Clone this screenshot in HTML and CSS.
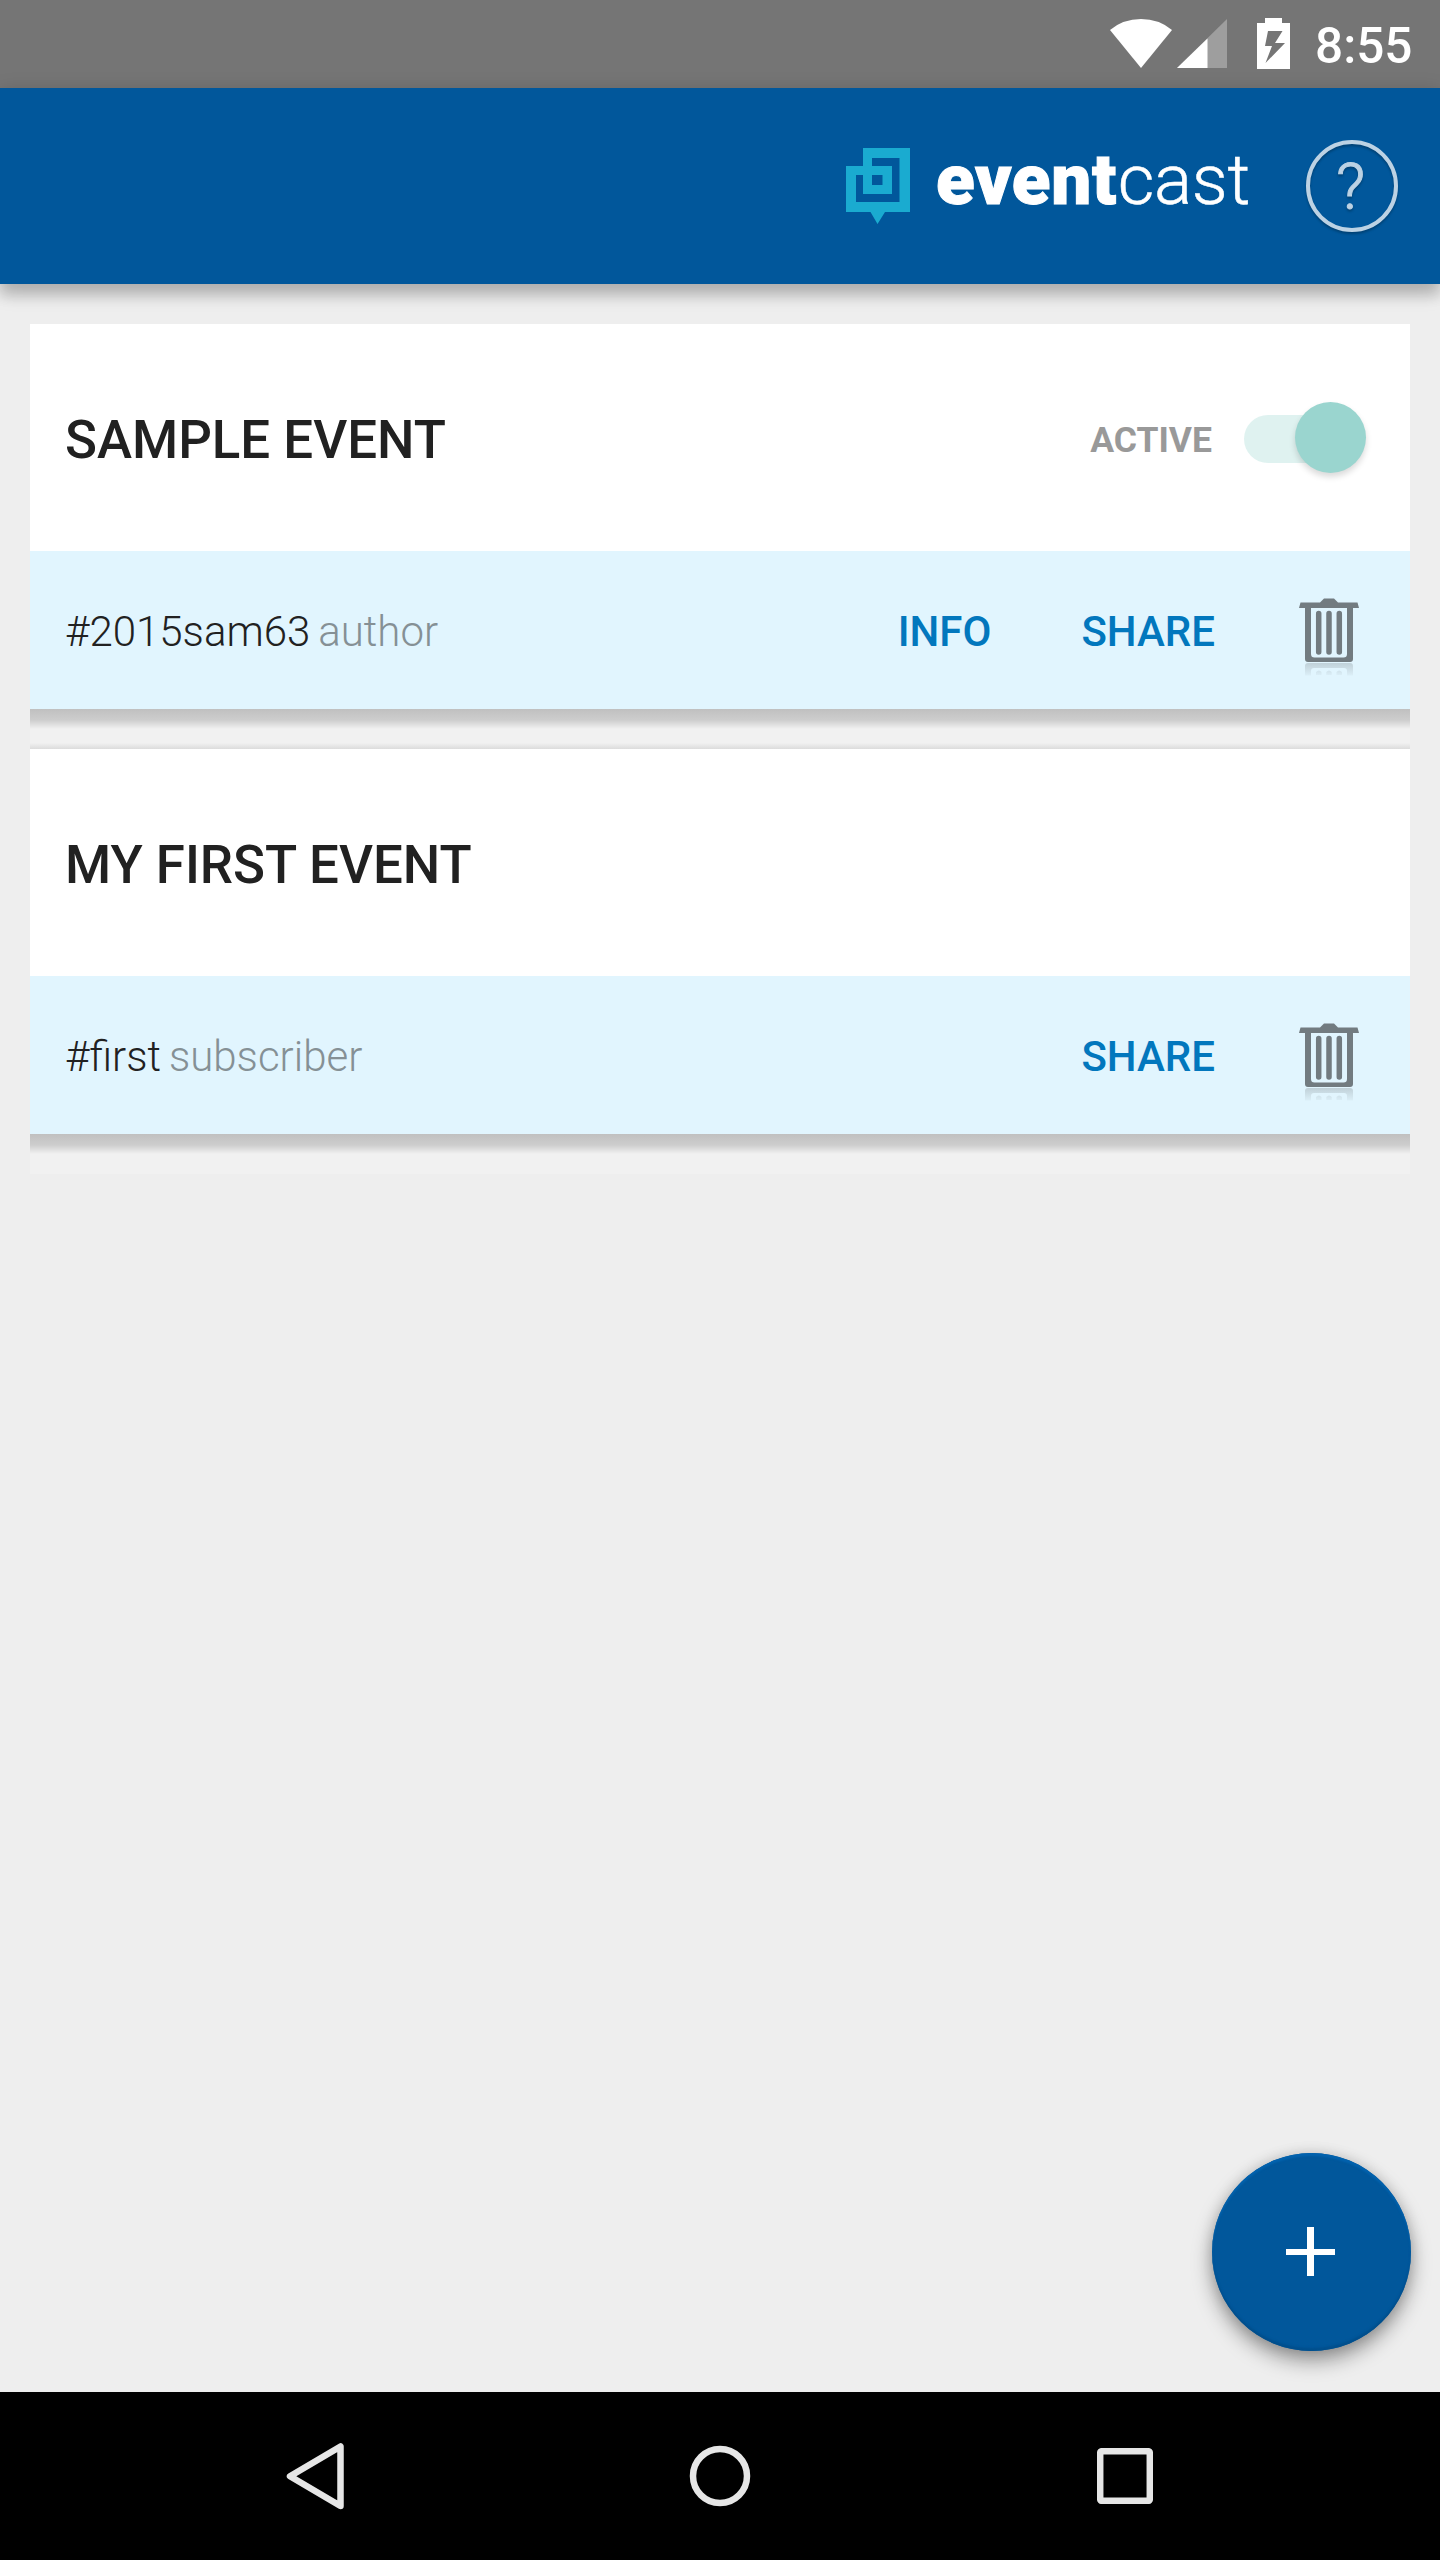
FILE: index.html
```html
<!DOCTYPE html>
<html lang="en">
<head>
<meta charset="utf-8">
<title>Eventcast</title>
<link rel="stylesheet" href="styles.css">
</head>
<body>
<svg class="defs" width="0" height="0" aria-hidden="true">
  <defs>
    <linearGradient id="fade" x1="0" y1="0" x2="0" y2="1">
      <stop offset="0" stop-color="#727b80" stop-opacity=".3"/>
      <stop offset="1" stop-color="#727b80" stop-opacity=".05"/>
    </linearGradient>
    <symbol id="trash" viewBox="0 0 60 78">
      <path fill="#727b80" d="M0 10 1.5 4.5H21L25 .5H35L39 4.5H58.500L60 10H54V61Q54 64 51 64H9Q6 64 6 61V10ZM12 10V56Q12 59.500 15.500 59.500H44.500Q48 59.500 48 56V10Z"/>
      <path stroke="#727b80" stroke-width="5.500" stroke-linecap="round" d="M19.700 15.500V54M30 15.500V54M40.300 15.500V54"/>
      <path fill="url(#fade)" d="M6 77.500V68Q6 65 9 65H51Q54 65 54 68V77.500H48V73Q48 70 45 70H15Q12 70 12 73V77.500ZM17 77V74Q20 71 22.500 74V77ZM27.300 77V74Q30 71 32.700 74V77ZM37.500 77V74Q40 71 43 74V77Z"/>
    </symbol>
  </defs>
</svg>
<div class="screen">
  <div class="status">
    <svg class="status-icons" width="182" height="54" viewBox="0 0 182 54">
      <path fill="#fff" d="M0 15Q13 4 31 4T62 15L31 53Z"/>
      <path fill="#9e9e9e" d="M67 53H117V4Z"/>
      <path fill="#fff" d="M67 53H97.500V23.500Z"/>
      <path fill="#fff" fill-rule="evenodd" d="M147 8H155V3H172V8H180V54H147ZM158 16 155 31H162L155.500 48 175 28H165L172.500 16Z"/>
    </svg>
    <span class="clock">8:55</span>
  </div>
  <header class="appbar">
    <svg class="logo" width="64" height="76" viewBox="0 0 64 76">
      <path fill="#1aabd0" fill-rule="evenodd" d="M17 0H64V64H39L31.500 76 24.500 64H0V18H17ZM26 10V18H46V46H17V27H10V54H53.500V10ZM26 27V37H36.500V27Z"/>
    </svg>
    <div class="wordmark"><span class="event">event</span><span class="cast">cast</span></div>
    <div class="help">?</div>
  </header>
  <main class="events">
    <article class="card">
      <div class="card-head">
        <h2>SAMPLE EVENT</h2>
        <span class="state">ACTIVE</span>
        <span class="toggle"><i class="thumb"></i></span>
      </div>
      <div class="card-foot">
        <span class="tag">#2015sam63</span><span class="role">author</span>
        <a class="action info">INFO</a>
        <a class="action">SHARE</a>
        <svg class="trash" width="60" height="78"><use href="#trash"/></svg>
      </div>
      <div class="card-shade"></div>
    </article>
    <article class="card">
      <div class="card-head">
        <h2>MY FIRST EVENT</h2>
      </div>
      <div class="card-foot">
        <span class="tag">#first</span><span class="role">subscriber</span>
        <a class="action">SHARE</a>
        <svg class="trash" width="60" height="78"><use href="#trash"/></svg>
      </div>
      <div class="card-shade last"></div>
    </article>
  </main>
  <div class="fab">
    <svg width="49" height="49" viewBox="0 0 49 49"><path fill="#fff" d="M21 0H28V22H49V28H28V49H21V28H0V22H21Z"/></svg>
  </div>
  <nav class="navbar">
    <svg width="62" height="70" viewBox="0 0 62 70"><path fill="none" stroke="#e6e6e6" stroke-width="6.500" stroke-linejoin="round" d="M56.500 5.500V65L6 35.200Z"/></svg>
    <svg width="62" height="62" viewBox="0 0 62 62"><circle cx="31" cy="31" r="27" fill="none" stroke="#e6e6e6" stroke-width="6.500"/></svg>
    <svg width="56" height="56" viewBox="0 0 56 56"><rect x="3.200" y="3.200" width="49.600" height="49.600" rx="1.500" fill="none" stroke="#e6e6e6" stroke-width="6.500"/></svg>
  </nav>
</div>
</body>
</html>
```
FILE: styles.css
```css
* { box-sizing: border-box; }
body {
  margin: 0;
  font-family: Roboto, "Liberation Sans", sans-serif;
  background: #eee;
  color: #212121;
}
.defs { display: block; position: absolute; }
svg { display: block; flex: none; }
.screen {
  position: relative;
  display: flex;
  flex-direction: column;
  width: 1440px;
  height: 2560px;
  overflow: hidden;
  background: #eee;
}
.status {
  display: flex;
  justify-content: flex-end;
  height: 88px;
  padding-right: 28px;
  background: #757575;
}
.status-icons { margin-top: 15px; }
.clock {
  width: 97px;
  margin-left: 23px;
  color: #fff;
  font-size: 49.500px;
  font-weight: 500;
  line-height: 93px;
  white-space: nowrap;
}
.appbar {
  display: flex;
  align-items: flex-start;
  height: 196px;
  padding-left: 846px;
  background: #01579b;
  box-shadow: 0 6px 20px rgba(0, 0, 0, .22), 0 12px 12px rgba(0, 0, 0, .12);
}
.logo { margin-top: 60px; }
.wordmark {
  display: flex;
  width: 314px;
  margin: 52px 0 0 26px;
  color: #fff;
  font-size: 71px;
  line-height: 80px;
  white-space: nowrap;
}
.event { width: 182px; font-weight: 900; letter-spacing: .7px; -webkit-text-stroke: 1px #fff; }
.cast { font-weight: 300; -webkit-text-stroke: .5px #fff; letter-spacing: -.3px; }
.help {
  width: 92px;
  height: 92px;
  margin: 52px 0 0 56px;
  padding-right: 3px;
  border: 4px solid #bcd2e4;
  border-radius: 50%;
  color: #bcd2e4;
  font-size: 64px;
  font-weight: 300;
  line-height: 88px;
  text-align: center;
  -webkit-text-stroke: 1px #bcd2e4;
  filter: drop-shadow(0 2px 1px rgba(0, 0, 0, .25));
}
.events { padding: 40px 30px 0; }
.card-head {
  display: flex;
  align-items: center;
  height: 227px;
  padding: 0 44px 0 35px;
  background: #fff;
}
h2 {
  flex: 1;
  margin: 5px 0 0;
  font-size: 52.800px;
  font-weight: 500;
  line-height: 64px;
  white-space: nowrap;
}
.state {
  margin: 4px 32px 0 0;
  color: #999;
  font-size: 35.500px;
  font-weight: 700;
}
.toggle {
  display: flex;
  align-items: center;
  justify-content: flex-end;
  width: 122px;
  height: 48px;
  margin-top: 3px;
  border-radius: 24px;
  background: linear-gradient(90deg, #dff2f0 90px, transparent 90px);
}
.thumb {
  width: 71px;
  height: 71px;
  margin-top: -3px;
  border-radius: 50%;
  background: #9ad5cf;
  box-shadow: 0 4px 6px rgba(0, 0, 0, .15);
  flex: none;
}
.card-foot {
  display: flex;
  align-items: center;
  height: 158px;
  padding: 3px 51px 0 35px;
  background: #e1f5fe;
  font-size: 42px;
  line-height: 52px;
}
.tag { font-weight: 300; }
.role { flex: 1; margin-left: 8px; color: #859095; font-weight: 300; }
.action { color: #0277bd; font-size: 42px; font-weight: 500; }
.info { margin-right: 90px; }
.trash { margin: 10px 0 0 84px; }
.card-shade {
  height: 40px;
  background: linear-gradient(180deg, #c0c0c0 0, #cdcdcd 11px, #f1f1f1 20px, #f1f1f1 34px, #dcdcdc 40px);
}
.card-shade.last {
  background: linear-gradient(180deg, #c0c0c0 0, #cdcdcd 11px, #f1f1f1 20px, #f1f1f1 40px);
}
.fab {
  position: absolute;
  left: 1212px;
  top: 2153px;
  display: flex;
  align-items: center;
  justify-content: center;
  width: 199px;
  height: 198px;
  padding: 0 2px 1px 0;
  border-radius: 50%;
  background: #01579b;
  box-shadow: 0 10px 20px rgba(0, 0, 0, .38), 0 0 14px rgba(0, 0, 0, .12), inset 0 3px 2px #0262ae, inset 0 -3px 2px #014f8d;
}
.navbar {
  display: grid;
  grid-template-columns: 405px 408px auto;
  align-items: center;
  height: 168px;
  margin-top: auto;
  padding-left: 284px;
  background: #000;
}
```
